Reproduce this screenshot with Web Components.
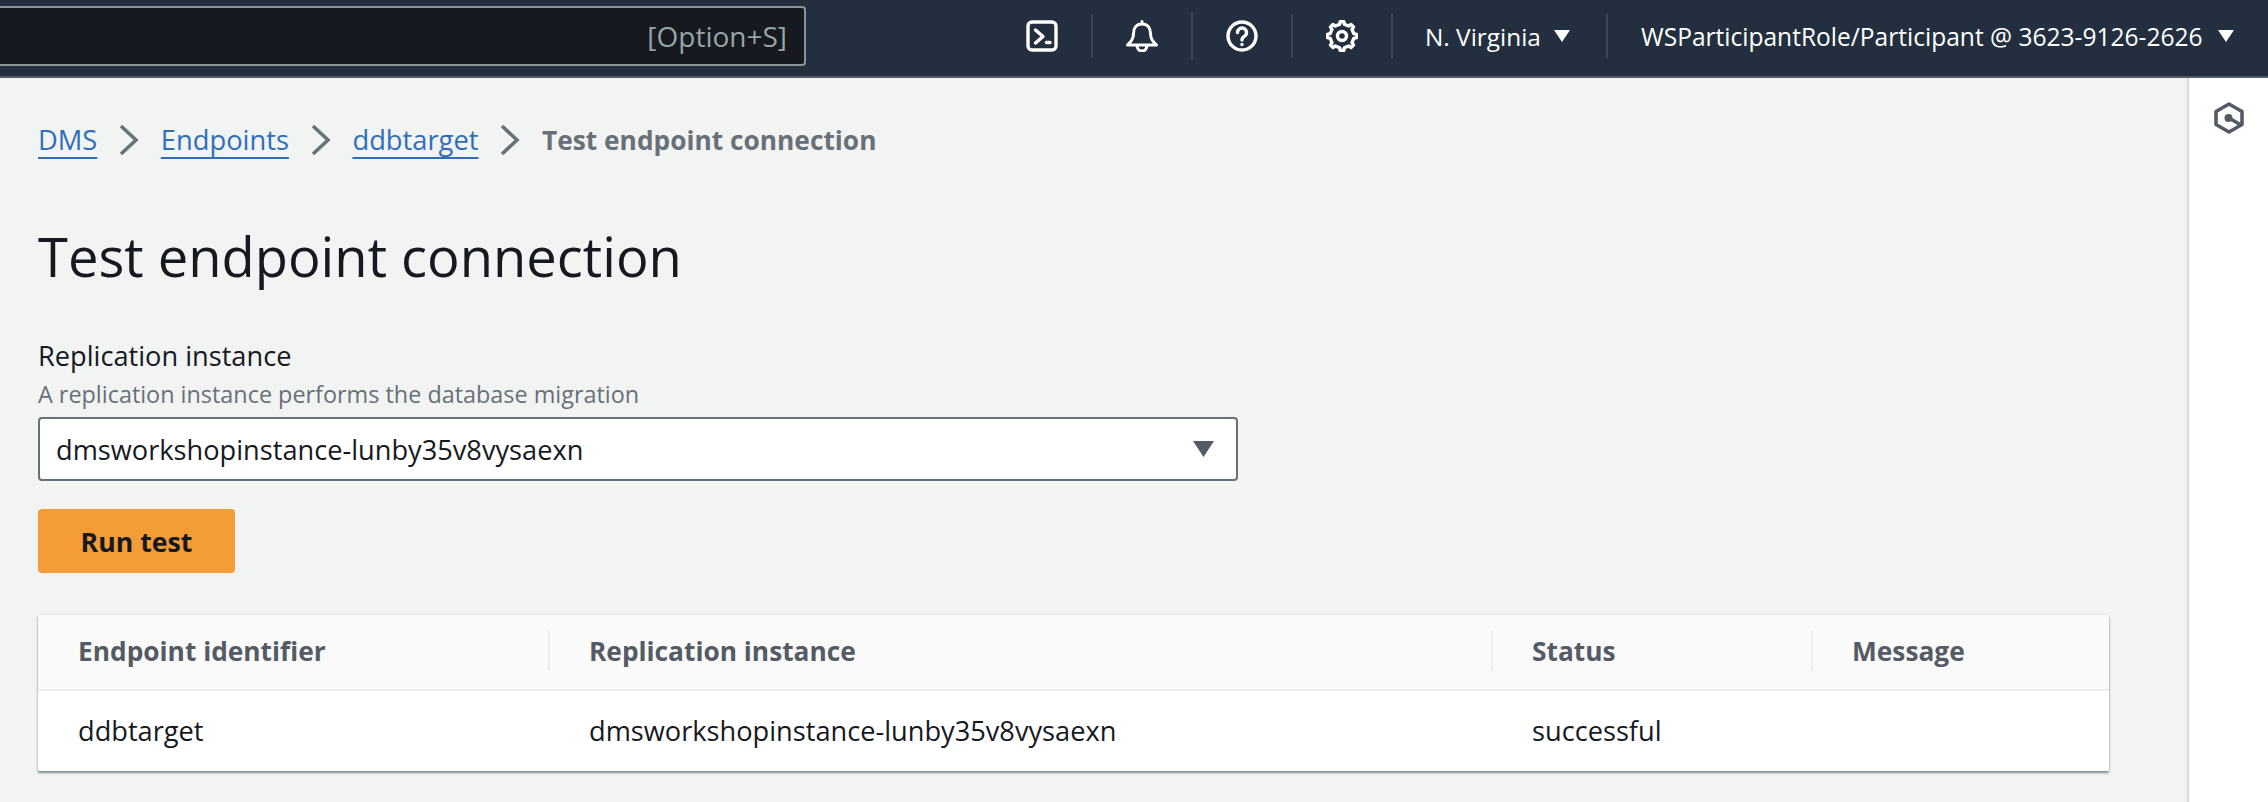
<!DOCTYPE html>
<html>
<head>
<style>
  html, body { margin: 0; height: 100%; }
  body { font-family: "Open Sans", "Noto Sans", sans-serif; background: #f2f3f3; overflow: hidden; }
</style>
</head>
<body>
<console-app>
  <top-nav slot="nav"></top-nav>
  <page-crumbs slot="main">
    <a href="#">DMS</a>
    <a href="#">Endpoints</a>
    <a href="#">ddbtarget</a>
    <span>Test endpoint connection</span>
  </page-crumbs>
  <page-title slot="main">Test endpoint connection</page-title>
  <form-field slot="main" label="Replication instance" desc="A replication instance performs the database migration">
    <select-box>dmsworkshopinstance-lunby35v8vysaexn</select-box>
  </form-field>
  <primary-button slot="main">Run test</primary-button>
  <result-table slot="main">
    <table-row head>
      <table-cell>Endpoint identifier</table-cell>
      <table-cell>Replication instance</table-cell>
      <table-cell>Status</table-cell>
      <table-cell>Message</table-cell>
    </table-row>
    <table-row>
      <table-cell>ddbtarget</table-cell>
      <table-cell>dmsworkshopinstance-lunby35v8vysaexn</table-cell>
      <table-cell>successful</table-cell>
      <table-cell></table-cell>
    </table-row>
  </result-table>
</console-app>

<script>
// makes the outline of the settings gear: 8 teeth round the centre of a 32 box
function gearPoints() {
  var pts = [];
  for (var i = 0; i < 8; i++) {
    var a = i * Math.PI / 4;
    [[12, -0.2], [14.6, -0.12], [14.6, 0.12], [12, 0.2]].forEach(function(p) {
      pts.push((16 + p[0] * Math.cos(a + p[1])).toFixed(1) + "," + (16 + p[0] * Math.sin(a + p[1])).toFixed(1));
    });
  }
  return pts.join(" ");
}

var caret = '<svg class="caret" width="16" height="12" viewBox="0 0 16 12"><path d="M0 0H16L8 12Z" fill="#fff"/></svg>';

class ConsoleApp extends HTMLElement {
  constructor() {
    super();
    this.attachShadow({ mode: "open" }).innerHTML = `
      <style>
        :host { display: flex; flex-direction: column; height: 802px; }
        .body { flex: 1; display: flex; }
        .content { flex: 1; padding: 42px 78px 0 38px; display: flex; flex-direction: column; align-items: flex-start; }
        .tools { width: 79px; background: #fff; border-left: 2px solid #d5dbdb; display: flex; justify-content: center; padding-top: 24px; align-items: flex-start; }
      </style>
      <slot name="nav"></slot>
      <div class="body">
        <div class="content"><slot name="main"></slot></div>
        <div class="tools">
          <svg width="32" height="32" viewBox="0 0 32 32" fill="none" stroke="#545b64" stroke-width="3.6">
            <path d="M16 2L29 9.5V22.5L16 30L3 22.5V9.5Z" stroke-linejoin="round"/>
            <circle cx="15.5" cy="16" r="4" fill="#545b64" stroke="none"/>
            <path d="M16 16L28 23"/>
          </svg>
        </div>
      </div>`;
  }
}

class TopNav extends HTMLElement {
  constructor() {
    super();
    this.attachShadow({ mode: "open" }).innerHTML = `
      <style>
        :host { display: flex; align-items: center; box-sizing: border-box; height: 78px; padding-bottom: 4px; background: #232f3e; border-bottom: 2px solid #545b64; color: #fff; font-size: 24.4px; }
        .search { width: 806px; box-sizing: border-box; height: 60px; background: #16191f; border: 2px solid #879596; border-left: 0; border-radius: 0 4px 4px 0; display: flex; align-items: center; justify-content: flex-end; padding-right: 17px; color: #95a5a6; font-size: 28px; }
        .gap { width: 187px; }
        .item { width: 98px; height: 44px; display: flex; align-items: center; justify-content: center; border-right: 2px solid #414750; }
        .item.tall { height: 48px; }
        .region { width: 181px; height: 44px; padding-left: 32px; display: flex; align-items: center; gap: 13px; border-right: 2px solid #414750; }
        .who { padding-left: 33px; display: flex; align-items: center; gap: 15px; white-space: nowrap; font-size: 24.55px; }
        svg { display: block; }
        .icon { fill: none; stroke: #fff; stroke-width: 3.4; stroke-linecap: round; stroke-linejoin: round; }
      </style>
      <div class="search">[Option+S]</div>
      <div class="gap"></div>
      <div class="item">
        <svg class="icon" width="32" height="32" viewBox="0 0 32 32">
          <rect x="2" y="2" width="28" height="28" rx="4"/>
          <path d="M9.5 10L17 16.5L9.5 23"/>
          <path d="M20.5 22.5H24"/>
        </svg>
      </div>
      <div class="item tall">
        <svg class="icon" width="32" height="32" viewBox="0 0 32 32" style="stroke-width:3">
          <path d="M16 1.5V4M16 4C10 4 7.5 8.5 7.5 13.5C7.5 19 5 21.5 1.5 25H30.5C27 21.5 24.5 19 24.5 13.5C24.5 8.5 22 4 16 4Z"/>
          <path d="M11 25.5A5 5.5 0 0 0 21 25.5"/>
        </svg>
      </div>
      <div class="item">
        <svg class="icon" width="32" height="32" viewBox="0 0 32 32">
          <circle cx="16" cy="16" r="14"/>
          <path d="M11.5 12.5A4.5 4.5 0 1 1 18.3 16.4C16.8 17.3 16 18 16 20"/>
          <path d="M16 24.5V24.6"/>
        </svg>
      </div>
      <div class="item">
        <svg class="icon" width="32" height="32" viewBox="0 0 32 32">
          <polygon points="${gearPoints()}"/>
          <circle cx="16" cy="16" r="4.5"/>
        </svg>
      </div>
      <div class="region"><span>N. Virginia</span>${caret}</div>
      <div class="who"><span>WSParticipantRole/Participant @ 3623-9126-2626</span>${caret}</div>`;
  }
}

class PageCrumbs extends HTMLElement {
  constructor() {
    super();
    this.attachShadow({ mode: "open" }).innerHTML = `
      <style>
        :host { display: flex; align-items: center; height: 40px; font-size: 27.3px; line-height: 40px; white-space: nowrap; }
        ::slotted(a) { color: #2e6fbd; text-decoration: underline; text-decoration-thickness: 2px; text-underline-offset: 7px; }
        ::slotted(span) { color: #687078; font-weight: 700; font-size: 26.3px; }
      </style>
      <slot></slot>`;
  }
  connectedCallback() {
    // chevron between each crumb
    var kids = Array.from(this.children);
    for (var i = 1; i < kids.length; i++) {
      var sep = document.createElementNS("http://www.w3.org/2000/svg", "svg");
      sep.setAttribute("width", "20");
      sep.setAttribute("height", "32");
      sep.setAttribute("viewBox", "0 0 20 32");
      sep.style.margin = "0 21.5px 0 22px";
      sep.innerHTML = '<path d="M2 2L17 16L2 30" fill="none" stroke="#687078" stroke-width="3.6"/>';
      this.insertBefore(sep, kids[i]);
    }
  }
}

class PageTitle extends HTMLElement {
  constructor() {
    super();
    this.attachShadow({ mode: "open" }).innerHTML = `
      <style>:host { display: block; margin-top: 60px; font-size: 54.3px; line-height: 72px; color: #16191f; white-space: nowrap; }</style>
      <slot></slot>`;
  }
}

class FormField extends HTMLElement {
  constructor() {
    super();
    this.attachShadow({ mode: "open" }).innerHTML = `
      <style>
        :host { display: block; margin-top: 44px; width: 1200px; }
        .label { font-size: 27.2px; line-height: 40px; color: #16191f; }
        .desc { font-size: 23.4px; line-height: 32px; margin: 2px 0 7px; color: #687078; }
      </style>
      <div class="label"></div>
      <div class="desc"></div>
      <slot></slot>`;
  }
  connectedCallback() {
    this.shadowRoot.querySelector(".label").textContent = this.getAttribute("label");
    this.shadowRoot.querySelector(".desc").textContent = this.getAttribute("desc");
  }
}

class SelectBox extends HTMLElement {
  constructor() {
    super();
    this.attachShadow({ mode: "open" }).innerHTML = `
      <style>
        :host { display: flex; align-items: center; justify-content: space-between; box-sizing: border-box; height: 64px; padding: 0 22px 0 16px; background: #fff; border: 2px solid #687078; border-radius: 4px; font-size: 27.2px; color: #16191f; }
      </style>
      <slot></slot>
      <svg width="21" height="16" viewBox="0 0 21 16"><path d="M0 0H21L10.5 16Z" fill="#545b64"/></svg>`;
  }
}

class PrimaryButton extends HTMLElement {
  constructor() {
    super();
    this.attachShadow({ mode: "open" }).innerHTML = `
      <style>
        :host { display: flex; align-items: center; justify-content: center; width: 197px; height: 64px; margin-top: 28px; background: #f49d37; border-radius: 4px; font-size: 26.7px; font-weight: 700; color: #16191f; }
      </style>
      <slot></slot>`;
  }
}

class ResultTable extends HTMLElement {
  constructor() {
    super();
    this.attachShadow({ mode: "open" }).innerHTML = `
      <style>
        :host { display: block; align-self: stretch; margin-top: 42px; background: #fff; box-shadow: 0 2px 2px rgba(0, 28, 36, .45), 0 0 2px rgba(0, 28, 36, .12); }
      </style>
      <slot></slot>`;
  }
}

class TableRow extends HTMLElement {
  constructor() {
    super();
    this.attachShadow({ mode: "open" }).innerHTML = `
      <style>
        :host { display: grid; grid-template-columns: 510px 943px 320px 298px; align-items: center; height: 80px; font-size: 27.2px; color: #16191f; }
        :host([head]) { height: 74px; background: #fafafa; border-bottom: 2px solid #eaeded; font-size: 26.3px; font-weight: 700; color: #545b64; }
      </style>
      <slot></slot>`;
  }
}

class TableCell extends HTMLElement {
  constructor() {
    super();
    this.attachShadow({ mode: "open" }).innerHTML = `
      <style>
        :host { display: block; line-height: 40px; min-height: 40px; padding-left: 41px; white-space: nowrap; }
        :host(:first-child) { padding-left: 40px; }
        :host-context(table-row[head]) { border-left: 2px solid #eaeded; padding-left: 39px; margin-bottom: 2px; }
        :host-context(table-row[head]):host(:first-child) { border-left: 0; padding-left: 40px; }
      </style>
      <slot></slot>`;
  }
}

customElements.define("console-app", ConsoleApp);
customElements.define("top-nav", TopNav);
customElements.define("page-crumbs", PageCrumbs);
customElements.define("page-title", PageTitle);
customElements.define("form-field", FormField);
customElements.define("select-box", SelectBox);
customElements.define("primary-button", PrimaryButton);
customElements.define("result-table", ResultTable);
customElements.define("table-row", TableRow);
customElements.define("table-cell", TableCell);
</script>
</body>
</html>
